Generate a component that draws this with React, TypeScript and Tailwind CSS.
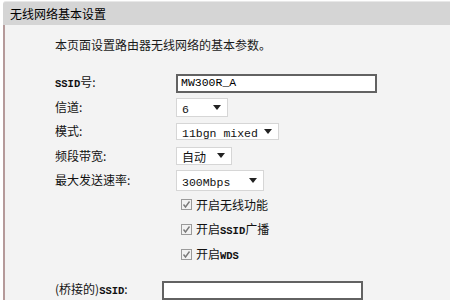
import React from 'react';

// ── Small form pieces ─────────────────────────────────────────

const cjk = "font-['Noto_Sans_CJK_SC','Noto_Sans',sans-serif]";
const mono = "font-['Liberation_Mono','Noto_Sans_CJK_SC',monospace]";

const Latin: React.FC<{ children: React.ReactNode }> = ({ children }) => (
  <span className={`${mono} text-[10.5px] font-bold`}>{children}</span>
);

const Arrow = () => (
  <svg width="8" height="5" viewBox="0 0 8 5" className="shrink-0">
    <path d="M0 0 H8 L4 5 Z" fill="#222" />
  </svg>
);

interface SelectBoxProps {
  value: React.ReactNode;
  className: string;
}

const SelectBox: React.FC<SelectBoxProps> = ({ value, className }) => (
  <div
    className={`flex items-center justify-between bg-white border border-[#d6d6d6] pl-[5px] pr-[6px] text-[#111] ${className}`}
  >
    <span className="leading-none">{value}</span>
    <Arrow />
  </div>
);

const Check: React.FC<{ label: React.ReactNode }> = ({ label }) => (
  <div className="flex items-center h-[25px] pl-[5px] gap-[4px]">
    <div className="w-[11px] h-[11px] border border-[#9a9a9a] bg-[#f2f2f2] flex items-center justify-center">
      <svg width="9" height="9" viewBox="0 0 9 9">
        <path d="M1.5 4.5 L3.5 7 L7.5 1.5" fill="none" stroke="#7a7a7a" strokeWidth="1.4" />
      </svg>
    </div>
    <span className={`${cjk} text-[12px] text-[#111] leading-none`}>{label}</span>
  </div>
);

const Row: React.FC<{ label: React.ReactNode; h: string; children?: React.ReactNode }> = ({
  label,
  h,
  children,
}) => (
  <div className={`flex items-center ${h}`}>
    <div className={`w-[121px] shrink-0 ${cjk} text-[12px] text-[#111] leading-none`}>{label}</div>
    {children}
  </div>
);

// ── Page ──────────────────────────────────────────────────────

export default function App() {
  return (
    <div className="w-[450px] h-[300px] overflow-hidden bg-white flex flex-col">
      {/* title bar */}
      <div className="mt-[1px] ml-[3px] h-[24px] shrink-0 bg-[#d5d5d5] border-t border-[#e8e8e8] rounded-tl-[3px] flex items-center pl-[7px]">
        <span className={`${cjk} text-[12px] text-black leading-none`}>无线网络基本设置</span>
      </div>

      {/* body */}
      <div className="flex-1 ml-[3px] border-l-2 border-[#b59a9a] bg-[#f3f3f3] pl-[50px] pt-[13px] flex flex-col">
        <div className={`h-[14px] flex items-center ${cjk} text-[12px] text-[#1a1a1a] leading-none`}>
          本页面设置路由器无线网络的基本参数。
        </div>

        <div className="mt-[19px] flex flex-col">
          <Row label={<><Latin>SSID</Latin>号:</>} h="h-[24px]">
            <div className={`w-[201px] h-[19px] bg-white border-2 border-[#626262] flex items-center pl-[3px] ${mono} text-[11.5px] text-black`}>
              MW300R_A
            </div>
          </Row>
          <Row label="信道:" h="h-[24px]">
            <SelectBox value={<span className={`${mono} text-[11.5px]`}>6</span>} className="w-[52px] h-[19px]" />
          </Row>
          <Row label="模式:" h="h-[24px]">
            <SelectBox value={<span className={`${mono} text-[11.5px]`}>11bgn mixed</span>} className="w-[103px] h-[17px]" />
          </Row>
          <Row label="频段带宽:" h="h-[25px]">
            <SelectBox value={<span className={`${cjk} text-[12px]`}>自动</span>} className="w-[56px] h-[18px]" />
          </Row>
          <Row label="最大发送速率:" h="h-[24px]">
            <SelectBox value={<span className={`${mono} text-[11.5px]`}>300Mbps</span>} className="w-[88px] h-[21px]" />
          </Row>

          <div className="pl-[121px] flex flex-col">
            <Check label="开启无线功能" />
            <Check label={<>开启<Latin>SSID</Latin>广播</>} />
            <Check label={<>开启<Latin>WDS</Latin></>} />
          </div>

          <div className="mt-[11px] flex items-center h-[24px]">
            <div className={`w-[107px] shrink-0 ${cjk} text-[12px] text-[#111] leading-none`}>
              (桥接的)<Latin>SSID</Latin>:
            </div>
            <div className="w-[201px] h-[19px] bg-white border-2 border-[#626262]" />
          </div>
        </div>
      </div>
    </div>
  );
}
